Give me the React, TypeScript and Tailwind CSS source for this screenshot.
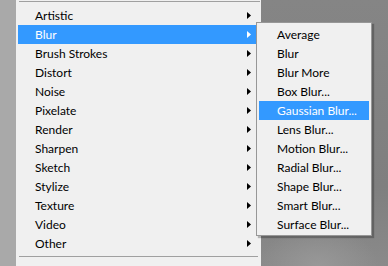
import React from 'react'

const mainItems = ['Artistic','Blur','Brush Strokes','Distort','Noise','Pixelate','Render','Sharpen','Sketch','Stylize','Texture','Video','Other']
const blurItems = ['Average','Blur','Blur More','Box Blur...','Gaussian Blur...','Lens Blur...','Motion Blur...','Radial Blur...','Shape Blur...','Smart Blur...','Surface Blur...']

function Arrow({ white }: { white?: boolean }){
  return (
    <svg width="4" height="7" viewBox="0 0 4 7" className="block">
      <path d="M0 0 L4 3.5 L0 7 Z" fill={white ? '#ffffff' : '#000000'} />
    </svg>
  )
}

export default function App(){
  return (
    <div className="relative flex w-[388px] h-[266px] overflow-hidden text-[12px] text-black" style={{ fontFamily: 'Lato, "Liberation Sans", Arial, sans-serif' }}>
      <div className="w-[16px] shrink-0 bg-[#a9a9a9]" />
      <div className="w-[245px] shrink-0 bg-[#f0f0f0] pt-[1px]">
        <div className="ml-[3px] mr-[1px] h-px bg-[#a0a0a0]" />
        <div className="mt-[4px] px-[2px]">
          {mainItems.map(item => {
            const active = item === 'Blur'
            return (
              <div key={item} className={`flex h-[19px] items-center pl-[17px] pr-[8px] ${active ? 'bg-[#3399ff] text-white' : ''}`}>
                <span className="flex-1">{item}</span>
                <Arrow white={active} />
              </div>
            )
          })}
        </div>
        <div className="mt-[3px] ml-[3px] mr-[3px] h-px bg-[#a0a0a0]" />
      </div>
      <div className="flex-1 bg-[radial-gradient(ellipse_60px_40px_at_45%_100%,#989898,transparent),linear-gradient(180deg,#858585,#7f7f7f_70%,#8a8a8a)]" />

      <div className="absolute left-[256px] top-[22px] w-[116px] border border-[#979797] bg-[#f0f0f0] px-[2px] pt-[2px] pb-[1px] shadow-[2px_2px_1px_rgba(0,0,0,0.25)]">
        {blurItems.map(item => {
          const active = item === 'Gaussian Blur...'
          return (
            <div key={item} className={`flex h-[19px] items-center pl-[18px] ${active ? 'bg-[#3399ff] text-white' : ''}`}>
              {item}
            </div>
          )
        })}
      </div>
    </div>
  )
}
